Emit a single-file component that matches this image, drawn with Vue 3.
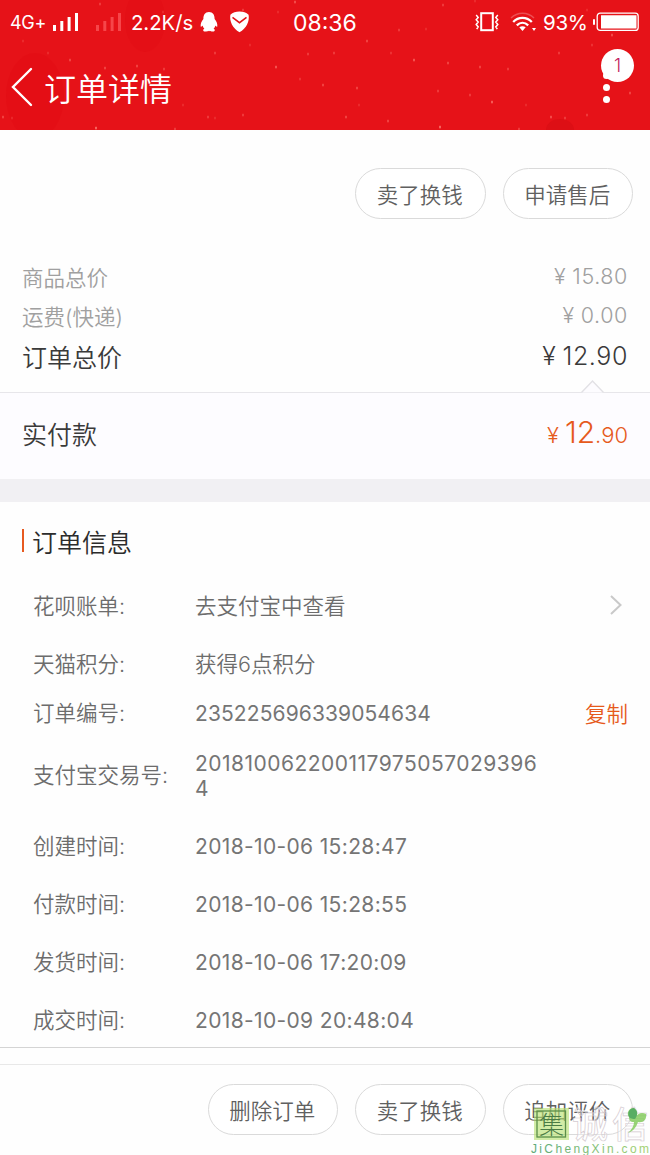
<script setup>
const flakes = [
  [100, 4, .5], [23, 41, .3], [48, 53, .3], [70, 60, .6], [105, 68, .6], [137, 66, .6], [164, 69, .5], [215, 53, .5], [250, 45, .3],
  [3, 117, .6], [12, 118, .3], [208, 117, .5], [215, 118, .3], [243, 115, .5], [175, 129, .5], [96, 128, 1], [183, 105, .3], [295, 2, .7],
  [278, 12, .3], [308, 54, .5], [334, 53, .5], [276, 67, .8], [300, 79, .4], [323, 85, .6], [357, 88, .6], [346, 117, .6], [388, 121, .6],
  [359, 105, .3], [367, 41, .6], [399, 30, .5], [426, 29, .3], [443, 5, .5], [391, 53, .4], [414, 60, .8], [448, 63, .6], [438, 91, .5],
  [440, 127, 1], [480, 67, .6], [508, 69, .5], [470, 95, .5], [492, 102, .9], [559, 53, .5], [526, 105, .3], [551, 117, .7], [565, 118, .5],
  [587, 115, .5], [519, 129, .5], [630, 93, .6], [612, 35, .7], [592, 45, .4], [587, 10, .3], [163, 12, .3], [243, 10, .5], [475, 1, .3],
]
const prices = [
  { label: '商品总价', value: '15.80' },
  { label: '运费(快递)', value: '0.00' },
  { label: '订单总价', value: '12.90', total: true },
]
const info = [
  { label: '花呗账单:', value: '去支付宝中查看', arrow: true },
  { label: '天猫积分:', value: '获得6点积分' },
  { label: '订单编号:', value: '235225696339054634', copy: true, kind: 'short' },
  { label: '支付宝交易号:', value: '2018100622001179750570293964', kind: 'tall' },
  { label: '创建时间:', value: '2018-10-06 15:28:47', kind: 'time' },
  { label: '付款时间:', value: '2018-10-06 15:28:55', kind: 'time' },
  { label: '发货时间:', value: '2018-10-06 17:20:09', kind: 'time' },
  { label: '成交时间:', value: '2018-10-09 20:48:04', kind: 'time' },
]
</script>

<template>
  <div class="page">
    <header class="head">
      <svg class="snow" width="650" height="130" viewBox="0 0 650 130">
        <ellipse cx="35" cy="96" rx="29" ry="43" fill="#df0911" opacity=".35" />
        <ellipse cx="145" cy="20" rx="20" ry="32" fill="#df0911" opacity=".25" />
        <ellipse cx="560" cy="130" rx="14" ry="11" fill="#d30b12" opacity=".5" />
        <ellipse v-for="(f, i) in flakes" :key="i" :cx="f[0]" :cy="f[1]" rx=".8" ry="1.5" fill="#ff8177" :opacity="f[2]" />
      </svg>
      <div class="status">
        <span class="net">4G+</span>
        <svg class="sig" width="26" height="20" viewBox="0 0 26 20" fill="#fff"><path d="M0 13h3v6H0zM7.300 9h3v10h-3zM14.600 5h3v14h-3zM22 1h3v18h-3z" /></svg>
        <svg class="sig2" width="26" height="20" viewBox="0 0 26 20" fill="#ff6265" opacity=".65"><path d="M0 13h3v6H0zM7.300 9h3v10h-3zM14.600 5h3v14h-3zM22 1h3v18h-3z" /></svg>
        <span class="speed">2.2K/s</span>
        <svg class="qq" width="18" height="20" viewBox="0 0 18 20" fill="#fff"><path d="M9 0C5 0 3.300 3 3.400 7.100 1.500 9.300.4 12 .7 14.400c.6.7 1.400-.3 1.900-1 .2 1.300.8 2.400 1.800 3.300-1.800.7-1.600 2.800.7 2.800 1.600 0 2.800-.2 3.900-.8 1.100.6 2.300.8 3.900.8 2.300 0 2.500-2.100.7-2.800 1-.9 1.600-2 1.800-3.300.5.7 1.300 1.700 1.900 1 .3-2.400-.8-5.100-2.700-7.300C14.700 3 13 0 9 0z" /></svg>
        <svg class="shield" width="21" height="22" viewBox="0 0 21 22"><path d="M10.500.6c3.600 0 6.800 1.100 9.100 3.100 1.200 6.400-2.200 13.700-9.100 17.600C3.600 17.400.2 10.100 1.400 3.700 3.700 1.700 6.900.6 10.500.6z" fill="#fff" /><path d="M3.500 6.300l7 5.400 7-5.400" fill="none" stroke="#e31219" stroke-width="1.500" /></svg>
        <span class="clock">08:36</span>
        <svg class="vib" width="24" height="20" viewBox="0 0 24 20" fill="none" stroke="#fff"><rect x="6.200" y="1.200" width="11.600" height="17" stroke-width="2" /><path d="M1.200 3l2 2.400-2 2.400 2 2.300-2 2.400 2 2.400-1.500 2.300M22.800 3l-2 2.400 2 2.400-2 2.300 2 2.400-2 2.400 1.500 2.300" stroke-width="1.500" /></svg>
        <svg class="wifi" width="28" height="20" viewBox="0 0 28 20" fill="none" stroke="#fff" stroke-width="2.300"><path d="M1 6c6.500-6.400 16.500-6.400 23 0" opacity=".25" stroke-width="1.500" /><path d="M3.200 10c5.300-5.500 13.300-5.500 18.600 0M6.800 13.400c3.400-3.300 8-3.300 11.400 0" /><path d="M9.300 15.300q3.200-2 6.400 0L12.500 19z" fill="#fff" stroke="none" /><path d="M22 16h4l-2 3z" fill="#fff" stroke="none" /></svg>
        <span class="pct">93%</span>
        <svg class="bat" width="47" height="20" viewBox="0 0 47 20"><rect x="4.200" y="1.200" width="41" height="17.200" rx="3" fill="none" stroke="#fff" stroke-width="1.300" /><path d="M8 3.200h35.500v13.200H8z" fill="#fff" /><rect x="0" y="7" width="2" height="6" rx="1" fill="#fff" /></svg>
      </div>
      <div class="bar">
        <svg class="back" width="22" height="40" viewBox="0 0 22 40"><path d="M20 2L2 20l18 18" fill="none" stroke="#fff" stroke-width="2.400" stroke-linecap="round" /></svg>
        <h1>订单详情</h1>
        <div class="more">
          <i></i><i></i><i></i>
          <b class="badge">1</b>
        </div>
      </div>
    </header>

    <div class="actions top">
      <button>卖了换钱</button><button>申请售后</button>
    </div>

    <section class="prices">
      <div v-for="p in prices" :key="p.label" class="price" :class="{ total: p.total }">
        <span>{{ p.label }}</span><span class="money"><i>¥</i>{{ p.value }}</span>
      </div>
    </section>
    <section class="paid">
      <svg class="notch" width="26" height="14" viewBox="0 0 26 14"><path d="M1.500 13.500L12.500 2l11 11.500" fill="#fdfcff" stroke="#e2e1e5" stroke-width="1.400" /></svg>
      <span>实付款</span>
      <span class="sum"><i>¥</i><b>12</b>.90</span>
    </section>
    <div class="gap"></div>

    <section class="info">
      <h2>订单信息</h2>
      <div v-for="r in info" :key="r.label" class="row" :class="r.kind">
        <span class="label">{{ r.label }}</span>
        <span class="value">{{ r.value }}</span>
        <svg v-if="r.arrow" class="arrow" width="14" height="22" viewBox="0 0 14 22"><path d="M2 2l9.500 9L2 20" fill="none" stroke="#c9c9c9" stroke-width="2" /></svg>
        <a v-if="r.copy" class="copy">复制</a>
      </div>
    </section>

    <footer class="actions bottom">
      <button>删除订单</button><button>卖了换钱</button><button>追加评价</button>
      <svg class="mark" width="130" height="60" viewBox="0 0 130 60">
        <rect x="14" y="13" width="35" height="32" fill="#b7e070" opacity=".62" />
        <rect x="17" y="16" width="28.500" height="26" fill="none" stroke="#5b8f49" stroke-width="1.300" />
        <text x="19" y="38.500" class="cjk" font-size="25" fill="#4a7c45">集</text>
        <text x="52" y="43" class="cjk outline" font-size="36">诚</text>
        <text x="92" y="43" class="cjk outline" font-size="36">信</text>
        <path d="M109 22c-3-4 0-9 5-9 4 3 4 6 2 9 2-4 6-5 10-3 1 6-3 9-8 8-2 6-5 9-10 11 4-4 6-7 6-11-4 0-5-2-5-5z" fill="#86cd60" opacity=".85" />
        <path d="M109 22c-2-5 1-9 5-9 4 3 4 7 1 11-2 0-5-.5-6-2z" fill="#58ad63" />
        <text x="11" y="57.500" class="latin" font-size="12" textLength="118" fill="url(#markInk)">JiChengXin.com</text>
        <defs><linearGradient id="markInk"><stop offset="0" stop-color="#5ca979" /><stop offset="1" stop-color="#a5d273" /></linearGradient></defs>
      </svg>
    </footer>
  </div>
</template>

<style>
body { margin: 0; background: #fefefe; }
</style>

<style scoped>
.page { width: 650px; height: 1155px; overflow: hidden; display: flex; flex-direction: column; background: #fefefe; color: #6c6c6c; font-family: Inter, "Noto Sans CJK SC", sans-serif; font-weight: 350; font-size: 21.500px; }
i { font-style: normal; }
.head { position: relative; height: 130px; background: #e61218; color: #fff; flex: none; }
.snow { position: absolute; inset: 0; }
.status { position: relative; height: 44px; display: flex; align-items: center; font-weight: 400; line-height: 44px; white-space: nowrap; }
.status svg, .status span { flex: none; }
.status span { padding-top: 1px; }
.net { margin-left: 10px; width: 43px; font-size: 18px; letter-spacing: -.3px; }
.sig2 { margin-left: 17px; }
.speed { margin-left: 9px; width: 69px; font-size: 20.300px; }
.shield { margin-left: 11px; }
.clock { margin-left: 43px; width: 66px; font-size: 23px; }
.vib { margin-left: 116px; }
.wifi { margin-left: 11px; }
.pct { margin-left: 5px; width: 50px; font-size: 20.500px; letter-spacing: -.3px; }
.bar { position: relative; height: 86px; display: flex; align-items: center; }
.back { margin-left: 11px; }
h1 { margin: 5px 0 0 11px; font-size: 32px; font-weight: 350; line-height: 48px; }
.more { position: relative; width: 7px; margin: 0 40px 0 auto; display: grid; gap: 5px; }
.more i { width: 7px; height: 7px; border-radius: 50%; background: #fff; }
.badge { position: absolute; left: -2px; top: -23px; width: 33px; height: 33px; border-radius: 50%; background: #fff; color: #c2185b; text-align: center; font-size: 18px; line-height: 34px; font-weight: 350; }
.actions { display: flex; justify-content: flex-end; gap: 17px; padding-right: 17px; flex: none; }
.top { height: 128px; padding-top: 38px; box-sizing: border-box; }
button { box-sizing: border-box; width: 130.500px; height: 51px; padding: 0 1px 0 0; border: 1px solid #dadada; border-radius: 26px; background: #fff; font: inherit; color: #606060; }
.prices { padding: 0 22px; height: 134px; flex: none; }
.price { display: flex; justify-content: space-between; align-items: center; height: 38px; color: #a0a0a0; line-height: 32px; }
.price:first-child { height: 40px; }
.price.total { height: 43px; color: #3a3a3a; font-size: 25px; }
.money { display: flex; letter-spacing: .6px; padding-bottom: 4px; }
.money i { margin-right: 6px; }
.paid { position: relative; box-sizing: border-box; height: 87px; flex: none; padding: 0 22px 7px; display: flex; align-items: center; justify-content: space-between; background: #fdfcff; border-top: 1px solid #e7e6ea; color: #3a3a3a; font-size: 25px; }
.notch { position: absolute; right: 44px; top: -14px; }
.sum { color: #e65a1c; font-size: 22px; padding-bottom: 2px; }
.sum i { margin-right: 6px; }
.sum b { font-size: 30px; font-weight: 350; }
.gap { height: 23px; background: #f1f0f3; flex: none; }
.info { height: 545px; flex: none; border-bottom: 1px solid #d4d4d4; }
h2 { margin: 27px 0 25px 22px; border-left: 2.500px solid #e75a20; padding-left: 8px; height: 23px; line-height: 28px; font-size: 25px; font-weight: 350; color: #2c2c2c; }
.row { display: flex; align-items: center; height: 58px; padding: 0 22px 0 33px; }
.short { height: 40px; }
.tall { height: 84px; }
.label { width: 162px; flex: none; line-height: 25px; }
.value { width: 350px; line-height: 25px; word-break: break-all; }
.short .value, .tall .value, .time .value { font-weight: 400; font-size: 21px; color: #757575; }
.short .value { letter-spacing: .1px; }
.tall .value { letter-spacing: .48px; padding-top: 1px; }
.time .value { letter-spacing: .35px; }
.arrow { margin: 0 5px 2px auto; }
.copy { margin-left: auto; color: #e65a1c; padding-bottom: 2px; }
.bottom { position: relative; margin-top: 16px; height: 91px; box-sizing: border-box; padding-top: 19px; border-top: 1px solid #e8e8e8; }
.mark { position: absolute; right: 0; bottom: 0; }
.cjk { font-family: "Noto Sans CJK SC", sans-serif; font-weight: 300; }
.outline { font-weight: 500; fill: #fff; fill-opacity: .35; stroke: #d5cbd1; stroke-width: .7px; }
.latin { font-family: "Liberation Sans", sans-serif; font-weight: 400; }
</style>
